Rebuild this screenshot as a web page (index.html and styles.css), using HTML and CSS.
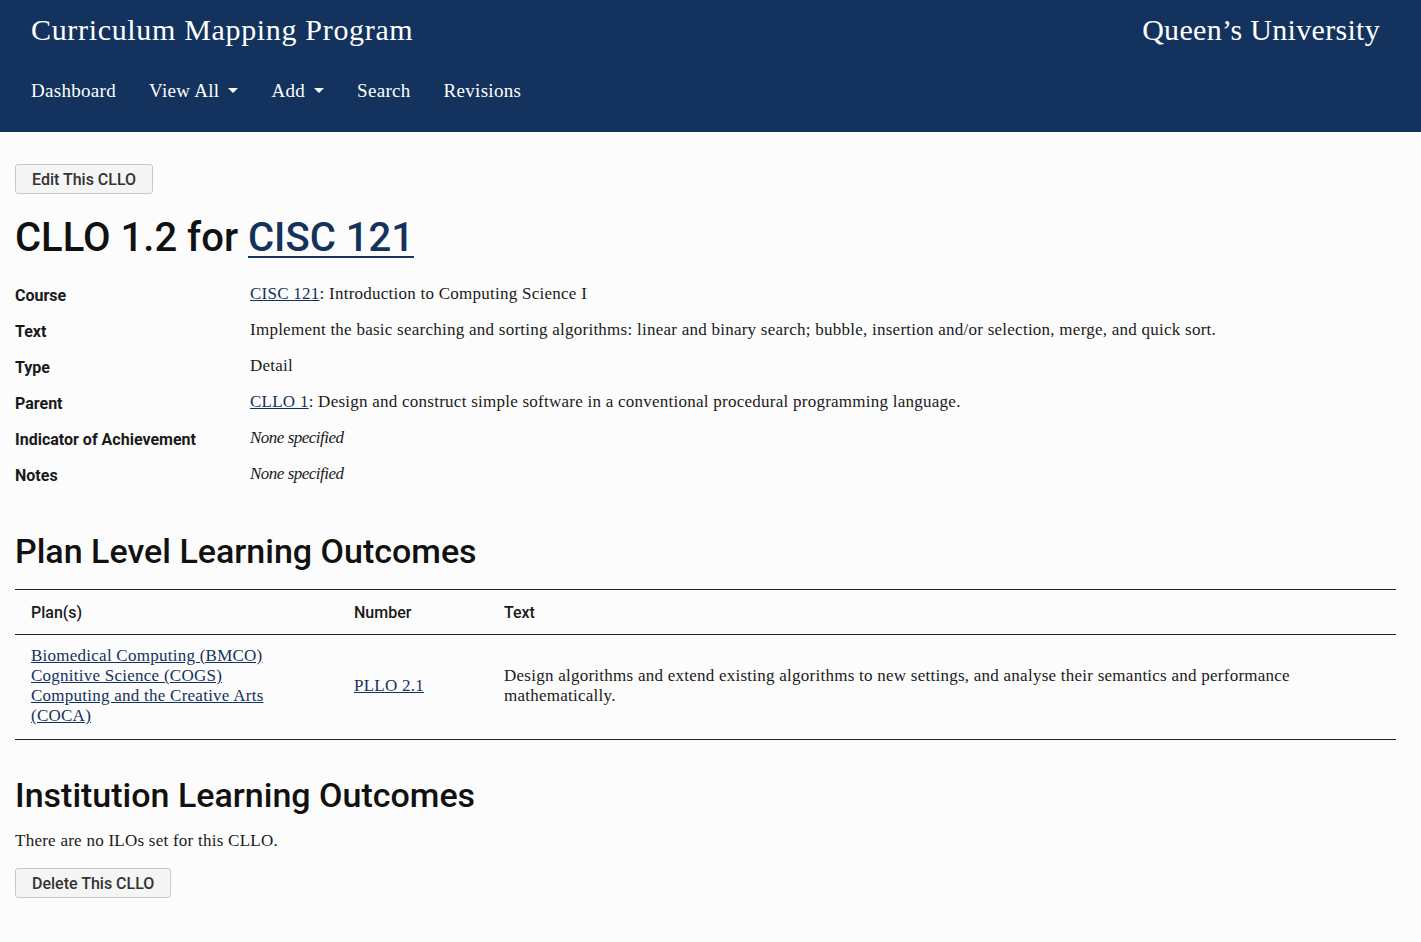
FILE: index.html
```html
<!DOCTYPE html>
<html lang="en">
<head>
<meta charset="utf-8">
<title>CLLO 1.2 for CISC 121</title>
<link rel="stylesheet" href="styles.css">
</head>
<body>
<header class="site-header">
  <div class="header-top">
    <a class="brand" href="#">Curriculum Mapping Program</a>
    <span class="uni">Queen’s University</span>
  </div>
  <nav class="nav">
    <a href="#">Dashboard</a>
    <a href="#" class="dropdown">View All</a>
    <a href="#" class="dropdown">Add</a>
    <a href="#">Search</a>
    <a href="#">Revisions</a>
  </nav>
</header>
<main class="content">
  <button class="btn">Edit This CLLO</button>
  <h1 class="title">CLLO 1.2 for <a href="#">CISC 121</a></h1>
  <dl class="details">
    <dt>Course</dt><dd><a href="#">CISC 121</a>: Introduction to Computing Science I</dd>
    <dt>Text</dt><dd>Implement the basic searching and sorting algorithms: linear and binary search; bubble, insertion and/or selection, merge, and quick sort.</dd>
    <dt>Type</dt><dd>Detail</dd>
    <dt>Parent</dt><dd><a href="#">CLLO 1</a>: Design and construct simple software in a conventional procedural programming language.</dd>
    <dt>Indicator of Achievement</dt><dd><em>None specified</em></dd>
    <dt>Notes</dt><dd><em>None specified</em></dd>
  </dl>
  <h2 class="section">Plan Level Learning Outcomes</h2>
  <table class="plo">
    <thead>
      <tr><th class="c-plan">Plan(s)</th><th class="c-num">Number</th><th>Text</th></tr>
    </thead>
    <tbody>
      <tr>
        <td class="c-plan"><a href="#">Biomedical Computing (BMCO)</a><br><a href="#">Cognitive Science (COGS)</a><br><a href="#">Computing and the Creative Arts (COCA)</a></td>
        <td class="c-num"><a href="#">PLLO 2.1</a></td>
        <td>Design algorithms and extend existing algorithms to new settings, and analyse their semantics and performance mathematically.</td>
      </tr>
    </tbody>
  </table>
  <h2 class="section section-ilo">Institution Learning Outcomes</h2>
  <p class="note">There are no ILOs set for this CLLO.</p>
  <button class="btn">Delete This CLLO</button>
</main>
</body>
</html>
```

FILE: styles.css
```css
html, body {
  margin: 0;
  padding: 0;
}
body {
  background: #fcfcfc;
  color: #1a1a1a;
  font-family: "Liberation Serif", "DejaVu Serif", serif;
  font-size: 17px;
}
a {
  color: #14325c;
}
.site-header {
  background: #13335e;
  color: #fff;
  height: 132px;
  padding: 0 31px;
  box-sizing: border-box;
}
.header-top {
  display: flex;
  justify-content: space-between;
  align-items: center;
  padding-top: 13px;
}
.brand {
  color: #fff;
  text-decoration: none;
  font-size: 30px;
  letter-spacing: 0.67px;
}
.uni {
  font-size: 30px;
  letter-spacing: 0.3px;
  margin-right: 10px;
}
.nav {
  display: flex;
  gap: 33px;
  margin-top: 33px;
}
.nav a {
  color: #fff;
  text-decoration: none;
  font-size: 19px;
  letter-spacing: 0.3px;
}
.nav a.dropdown::after {
  content: "";
  display: inline-block;
  margin-left: 9px;
  vertical-align: 4px;
  border-top: 5px solid #fff;
  border-left: 5px solid transparent;
  border-right: 5px solid transparent;
}
.content {
  padding: 32px 25px 160px 15px;
}
.btn {
  font-family: Roboto, "Liberation Sans", sans-serif;
  font-size: 16px;
  font-weight: 500;
  color: #333;
  background: #f5f5f5;
  border: 1px solid #c8c8c8;
  border-radius: 3px;
  padding: 4px 16px;
  height: 30px;
  cursor: pointer;
}
.title {
  font-family: Roboto, "Liberation Sans", sans-serif;
  font-weight: 500;
  font-size: 40px;
  margin: 20px 0 22px;
  color: #111;
}
.title a {
  color: #14325c;
  text-decoration-thickness: 2px;
  text-underline-offset: 5px;
}
.details {
  display: grid;
  grid-template-columns: 235px 1fr;
  row-gap: 12px;
  margin: 0;
}
.details dt {
  font-family: Roboto, "Liberation Sans", sans-serif;
  font-weight: 700;
  font-size: 16px;
  line-height: 22px;
  padding-top: 2px;
}
.details dd {
  margin: 0;
  line-height: 22px;
  letter-spacing: 0.25px;
}
.details em {
  letter-spacing: -0.5px;
}
.section {
  font-family: Roboto, "Liberation Sans", sans-serif;
  font-weight: 500;
  font-size: 34px;
  margin: 44px 0 18px;
  color: #111;
}
.plo {
  width: 100%;
  border-collapse: collapse;
}
.plo th {
  font-family: Roboto, "Liberation Sans", sans-serif;
  font-weight: 500;
  font-size: 16px;
  text-align: left;
  padding: 13px 16px 12px;
  border-top: 1px solid #222;
  border-bottom: 1px solid #222;
}
.plo td {
  padding: 11px 16px 13px;
  border-bottom: 1px solid #222;
  vertical-align: middle;
  line-height: 20px;
  letter-spacing: 0.25px;
}
.plo .c-plan {
  width: 291px;
}
.plo .c-num {
  width: 118px;
  padding-left: 16px;
}
.section-ilo {
  margin-top: 35px;
  margin-bottom: 16px;
}
.note {
  margin: 0 0 17px;
  letter-spacing: 0.25px;
}
```
